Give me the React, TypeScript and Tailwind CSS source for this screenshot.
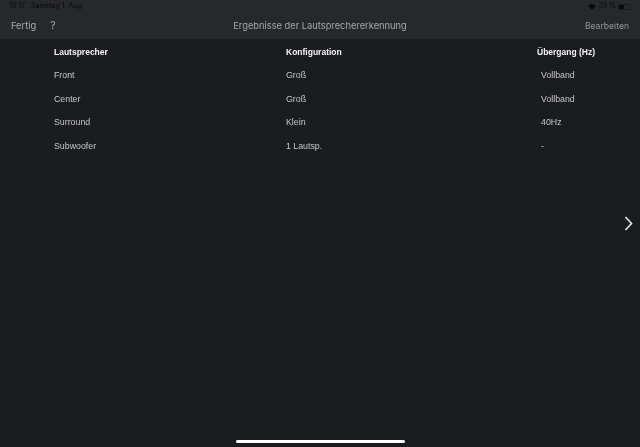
import React from "react";

const rows = [
  ["Front", "Groß", "Vollband"],
  ["Center", "Groß", "Vollband"],
  ["Surround", "Klein", "40Hz"],
  ["Subwoofer", "1 Lautsp.", "-"],
];

export default function App() {
  return (
    <div className="relative flex h-[447px] w-[640px] flex-col overflow-hidden bg-[#1b1c20] font-['Inter',sans-serif]">
      <header className="h-[39px] shrink-0 bg-[#27282c] blur-[0.35px]">
        <div className="flex h-[13px] items-center justify-between pl-[9px] pr-[9px] text-[7px] text-[#0b0c0e]">
          <div className="flex gap-[6px]">
            <span>13:17</span>
            <span>Samstag 1. Aug.</span>
          </div>
          <div className="flex items-center gap-[2px]">
            <svg width="8" height="6" viewBox="0 0 9 7" fill="#0b0c0e">
              <path d="M4.5 7 0 2.4C2.5-.6 6.5-.6 9 2.4Z" />
            </svg>
            <span>39 %</span>
            <div className="flex h-[6px] w-[13px] rounded-[1.5px] border border-[#1b1c1f]">
              <div className="w-[5px] bg-[#0b0c0e]" />
            </div>
          </div>
        </div>
        <div className="relative flex h-[26px] items-start justify-between px-[11px] pt-[3px] text-[9.3px] leading-[20px] text-[#a8abb0]">
          <div className="flex gap-[14px]">
            <span>Fertig</span>
            <span className="text-[10.5px]">?</span>
          </div>
          <span className="absolute left-0 right-0 top-[3px] text-center text-[#a4a8ac]">
            Ergebnisse der Lautsprechererkennung
          </span>
          <span className="text-[8.6px] text-[#939599]">Bearbeiten</span>
        </div>
      </header>
      <main className="pl-[54px] pt-[1.5px] font-['Liberation_Sans',Arial,sans-serif] text-[8.8px] text-[#c6c7c9] blur-[0.25px]">
        <div className="grid h-[23.6px] grid-cols-[232px_251px_1fr] items-center text-[8.5px] font-bold text-[#f4f4f5]">
          <span>Lautsprecher</span>
          <span>Konfiguration</span>
          <span>Übergang (Hz)</span>
        </div>
        {rows.map((r) => (
          <div key={r[0]} className="grid h-[23.6px] grid-cols-[232px_251px_1fr] items-center">
            <span>{r[0]}</span>
            <span>{r[1]}</span>
            <span className="pl-[4px]">{r[2]}</span>
          </div>
        ))}
      </main>
      <svg
        className="absolute left-[624px] top-[216px]"
        width="9"
        height="15"
        viewBox="0 0 9 15"
        fill="none"
        stroke="#e8e8e9"
        strokeWidth="1.6"
      >
        <path d="M1.5 1 7.5 7.5 1.5 14" />
      </svg>
      <div className="absolute bottom-[4px] left-[236px] h-[3px] w-[169px] rounded-full bg-white" />
    </div>
  );
}
